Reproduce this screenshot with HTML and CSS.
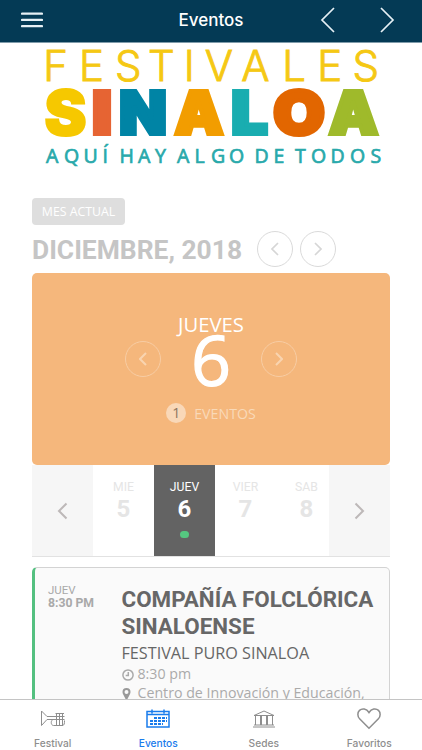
FILE: index.html
```html
<!DOCTYPE html>
<html lang="es">
<head>
    <meta charset="UTF-8">
    <meta name="viewport" content="width=device-width, initial-scale=1.0">
    <title>Eventos</title>
    <link rel="stylesheet" href="styles.css">
</head>
<body>
    <header class="navbar">
        <svg class="menu-icon" width="22" height="16" viewBox="0 0 22 16"><path d="M1 1.700h20M1 7.900h20M1 14.100h20"/></svg>
        <h1>Eventos</h1>
        <div class="nav-arrows">
            <svg width="16" height="26" viewBox="0 0 16 26"><path d="M14 1L2 13l12 12"/></svg>
            <svg width="16" height="26" viewBox="0 0 16 26"><path d="M2 1l12 12L2 25"/></svg>
        </div>
    </header>

    <main>
        <svg class="logo" width="422" height="130" viewBox="0 43 422 130">
            <text class="logo-top" y="81" x="43.200 79 115 148 183.700 204.700 241.300 282.200 317.200 352.500">FESTIVALES</text>
            <g class="logo-name">
                <text class="thin" x="44.500" y="134.500" textLength="42" lengthAdjust="spacingAndGlyphs" fill="#f6c800" stroke="#f6c800">S</text>
                <text x="92" y="134" textLength="20" lengthAdjust="spacingAndGlyphs" fill="#e66433" stroke="#e66433">I</text>
                <text x="119.300" y="134" textLength="47.500" lengthAdjust="spacingAndGlyphs" fill="#0084a5" stroke="#0084a5">N</text>
                <text x="174.700" y="134" textLength="48.500" lengthAdjust="spacingAndGlyphs" fill="#f29d00" stroke="#f29d00">A</text>
                <text x="231.300" y="134" textLength="36.500" lengthAdjust="spacingAndGlyphs" fill="#19adb0" stroke="#19adb0">L</text>
                <text x="273.300" y="134" textLength="51.500" lengthAdjust="spacingAndGlyphs" fill="#e26600" stroke="#e26600">O</text>
                <text x="329" y="134" textLength="49" lengthAdjust="spacingAndGlyphs" fill="#9fba2b" stroke="#9fba2b">A</text>
            </g>
            <text class="logo-tag" y="163" x="46 64 83.500 102.500 112 119.500 138 155 168 177 194.500 211 229 244 254.500 273.500 284 295 311 330.500 350 370.500">AQUÍ HAY ALGO DE TODOS</text>
        </svg>

        <section class="calendar">
            <button class="current-month">MES ACTUAL</button>
            <div class="month">
                <h2>DICIEMBRE, 2018</h2>
                <span class="round"><svg width="8" height="14" viewBox="0 0 8 14"><path d="M7 1L1 7l6 6"/></svg></span>
                <span class="round"><svg width="8" height="14" viewBox="0 0 8 14"><path d="M1 1l6 6-6 6"/></svg></span>
            </div>

            <div class="day-box">
                <div class="day-name">JUEVES</div>
                <div class="day-row">
                    <span class="round"><svg width="8" height="14" viewBox="0 0 8 14"><path d="M7 1L1 7l6 6"/></svg></span>
                    <span class="day-number">6</span>
                    <span class="round"><svg width="8" height="14" viewBox="0 0 8 14"><path d="M1 1l6 6-6 6"/></svg></span>
                </div>
                <div class="day-events"><span class="count">1</span>EVENTOS</div>
            </div>

            <div class="days">
                <div class="arrow"><svg width="11" height="18" viewBox="0 0 11 18"><path d="M9.500 1.500L2 9l7.500 7.500"/></svg></div>
                <div class="day"><span>MIE</span><b>5</b></div>
                <div class="day active"><span>JUEV</span><b>6</b><i></i></div>
                <div class="day"><span>VIER</span><b>7</b></div>
                <div class="day last"><span>SAB</span><b>8</b></div>
                <div class="arrow"><svg width="11" height="18" viewBox="0 0 11 18"><path d="M1.500 1.500L9 9l-7.500 7.500"/></svg></div>
            </div>

            <article class="event">
                <div class="event-time">JUEV<b>8:30 PM</b></div>
                <div class="event-info">
                    <h3>COMPAÑÍA FOLCLÓRICA SINALOENSE</h3>
                    <div class="subtitle">FESTIVAL PURO SINALOA</div>
                    <div class="detail">
                        <svg width="12" height="12" viewBox="0 0 12 12"><circle cx="6" cy="6" r="5.100"/><path d="M6.300 3v3.400H3.700"/></svg>
                        8:30 pm
                    </div>
                    <div class="detail">
                        <svg class="pin" width="12" height="12" viewBox="0 0 12 12"><path fill-rule="evenodd" d="M4.500 0a4 4 0 0 0-4 4c0 1 .3 1.600.6 2.200L3.800 11.500q.7 1 1.400 0L7.900 6.200C8.200 5.600 8.500 5 8.500 4a4 4 0 0 0-4-4zM4.500 2a2 2 0 1 1 0 4 2 2 0 0 1 0-4z"/></svg>
                        Centro de Innovación y Educación,
                    </div>
                </div>
            </article>
        </section>
    </main>

    <nav class="tabbar">
        <a class="tab">
            <svg width="26" height="24" viewBox="0 0 26 24"><path d="M1.500 4v14.500L7 12.500h17.500M1.500 4L7 9.500h17.500M16.500 7v12M19.500 7v12M22.500 7v12M15.500 6.500h8.500M13.500 12.500c-3 0-3 6 0 6h8.500c2.500 0 2.500-2 2.500-5"/></svg>
            <span>Festival</span>
        </a>
        <a class="tab selected">
            <svg width="26" height="24" viewBox="0 0 26 24"><path d="M2 4.500h22v15.500H2zM2 7.500h22M7 2.500v4M19 2.500v4"/><path class="dates" d="M9 11h13M5 14h17M5 17h13"/></svg>
            <span>Eventos</span>
        </a>
        <a class="tab">
            <svg width="26" height="24" viewBox="0 0 26 24"><path d="M3 8.500L13 4l10 4.500zM4.500 9v9M9.500 9v9M10.500 9v9M15.500 9v9M16.500 9v9M21.500 9v9M3 18h20M2 20h22"/></svg>
            <span>Sedes</span>
        </a>
        <a class="tab">
            <svg width="26" height="24" viewBox="0 0 26 24"><path class="heart" d="M13 21.200L3.600 11.800C1.300 9.400 1.300 5.500 3.500 3.400c2.600-2.500 7-1.900 9.500 2.100 2.500-4 6.900-4.600 9.500-2.100 2.200 2.100 2.200 6-.1 8.400z"/></svg>
            <span>Favoritos</span>
        </a>
    </nav>
</body>
</html>
```
FILE: styles.css
```css
* {
    box-sizing: border-box;
}
body {
    margin: 0;
    height: 750px;
    display: flex;
    flex-direction: column;
    overflow: hidden;
    background-color: #fff;
    font-family: "Open Sans", sans-serif;
}
svg {
    display: block;
    fill: none;
    flex-shrink: 0;
}
h1, h2, h3 {
    margin: 0;
}

/* Barra superior */
.navbar {
    height: 43px;
    flex-shrink: 0;
    display: grid;
    grid-template-columns: 1fr auto 1fr;
    align-items: center;
    padding: 0 27px 3px 21px;
    background-color: #043a55;
    border-bottom: 1px solid #809cab;
}
.navbar svg {
    stroke: #e6f0f5;
    stroke-width: 1.700;
}
.navbar .menu-icon {
    stroke-width: 2.200;
    stroke-linecap: round;
}
.navbar h1 {
    color: #fff;
    font: 500 17px/20px Inter, sans-serif;
    padding-left: 6px;
}
.nav-arrows {
    display: flex;
    justify-content: flex-end;
    gap: 43px;
}

main {
    flex: 1;
    min-height: 0;
    overflow: hidden;
}

/* Logo */
.logo-top {
    font-family: Inter, sans-serif;
    font-size: 42px;
    font-weight: 300;
    fill: #f5c814;
    stroke: #f5c814;
    stroke-width: 0.900;
}
.logo-name {
    font-family: Inter, sans-serif;
    font-size: 59px;
    font-weight: 900;
    stroke-width: 4;
}
.logo-name .thin {
    font-size: 61.500px;
    stroke-width: 2;
}
.logo-tag {
    font-size: 19.500px;
    font-weight: 400;
    fill: #29a9ab;
    stroke: #29a9ab;
    stroke-width: 0.700;
}

/* Calendario */
.calendar {
    padding: 25px 32px 0;
}
.current-month {
    display: block;
    width: 93px;
    height: 27px;
    padding: 0;
    border: 0;
    border-radius: 4px;
    background-color: #dedede;
    color: #fff;
    font: 12.300px "Open Sans", sans-serif;
}
.month {
    display: flex;
    align-items: center;
    height: 48px;
}
.month h2 {
    width: 225px;
    padding-top: 2px;
    color: #c5c5c5;
    font: 700 26.400px/36px Roboto, sans-serif;
    white-space: nowrap;
}
.round {
    width: 36px;
    height: 36px;
    border: 1px solid #dadada;
    border-radius: 50%;
    display: flex;
    align-items: center;
    justify-content: center;
}
.round + .round {
    margin-left: 7px;
}
.round svg {
    stroke: #d6d6d6;
    stroke-width: 1.700;
}
.day-box {
    height: 192px;
    padding-top: 37px;
    border-radius: 5px;
    background-color: #f5b77c;
    color: #fff;
    text-align: center;
}
.day-name {
    font-size: 20.300px;
    line-height: 28px;
}
.day-row {
    display: flex;
    justify-content: center;
    align-items: center;
    height: 42px;
}
.day-row .round {
    border-color: #f8cda4;
}
.day-row .round svg {
    stroke: #f9d4b0;
    stroke-width: 2;
}
.day-number {
    width: 100px;
    font-size: 70px;
    line-height: 50px;
    -webkit-text-stroke: 1.200px #fff;
}
.day-row .day-number + .round {
    margin-left: 0;
}
.day-events {
    display: flex;
    justify-content: center;
    align-items: center;
    margin-top: 23px;
    font-size: 14.200px;
    color: #f9d9b8;
}
.count {
    width: 20px;
    height: 20px;
    margin-right: 8px;
    border-radius: 50%;
    background-color: #f9d8b8;
    color: #8d7560;
    line-height: 20px;
}
.days {
    display: flex;
    height: 92px;
    border-bottom: 1px solid #e2e2e2;
}
.days > div {
    width: 61px;
    flex-shrink: 0;
}
.arrow {
    display: flex;
    align-items: center;
    justify-content: center;
    background-color: #f6f6f6;
}
.arrow svg {
    stroke: #bdb8b8;
    stroke-width: 2;
}
.day {
    display: flex;
    flex-direction: column;
    align-items: center;
    padding-top: 14px;
    color: #e5e5e5;
    font-family: Roboto, sans-serif;
}
/* la flecha derecha tapa parte del ultimo dia */
.day.last {
    margin-right: -8px;
}
.day span {
    font-size: 12.200px;
    line-height: 16px;
}
.day b {
    font-size: 24px;
    line-height: 29px;
}
.day.active {
    background-color: #636363;
    color: #fff;
}
.day i {
    width: 9px;
    height: 7px;
    margin-top: 7px;
    border-radius: 4px;
    background-color: #55c780;
}

/* Evento */
.event {
    display: flex;
    height: 180px;
    margin-top: 10px;
    padding: 16px 0 0 13px;
    border: 1px solid #d3d3d3;
    border-left: 3px solid #54c080;
    border-radius: 5px;
    background-color: #fafafa;
}
.event-time {
    width: 73.500px;
    flex-shrink: 0;
    color: #a9a9a9;
    font: 11.500px/13px Roboto, sans-serif;
}
.event-time b {
    display: block;
    font-size: 12.200px;
}
.event-info {
    flex: 1;
    padding-top: 2px;
    color: #666;
}
.event-info h3 {
    font: 700 22.400px/26.500px Roboto, sans-serif;
    color: #676767;
}
.subtitle {
    margin-top: 3px;
    font-size: 16.200px;
    line-height: 22px;
    white-space: nowrap;
}
.detail {
    display: flex;
    align-items: center;
    gap: 4px;
    font-size: 14.200px;
    line-height: 19px;
    white-space: nowrap;
    color: #aaa;
}
.detail svg {
    margin-top: 3px;
    stroke: #aaa;
    stroke-width: 1.500;
}
.detail .pin {
    stroke: none;
    fill: #999;
}

/* Barra inferior */
.tabbar {
    display: flex;
    height: 51px;
    flex-shrink: 0;
    border-top: 1px solid #c4c4c4;
    background-color: #fff;
}
.tab {
    flex: 1;
    display: flex;
    flex-direction: column;
    align-items: center;
    padding-top: 7px;
    color: #8e8e8e;
    font: 500 10.200px/14px Inter, sans-serif;
}
.tab svg {
    stroke: #8e8e8e;
    stroke-width: 1;
}
.tab .heart {
    stroke-width: 1.500;
}
.tab span {
    margin-top: 5px;
}
.tab.selected {
    color: #1a7cec;
}
.tab.selected svg {
    stroke: #1a7cec;
    stroke-width: 1.500;
}
.tab .dates {
    stroke-width: 2;
    stroke-dasharray: 3 1;
}
```
